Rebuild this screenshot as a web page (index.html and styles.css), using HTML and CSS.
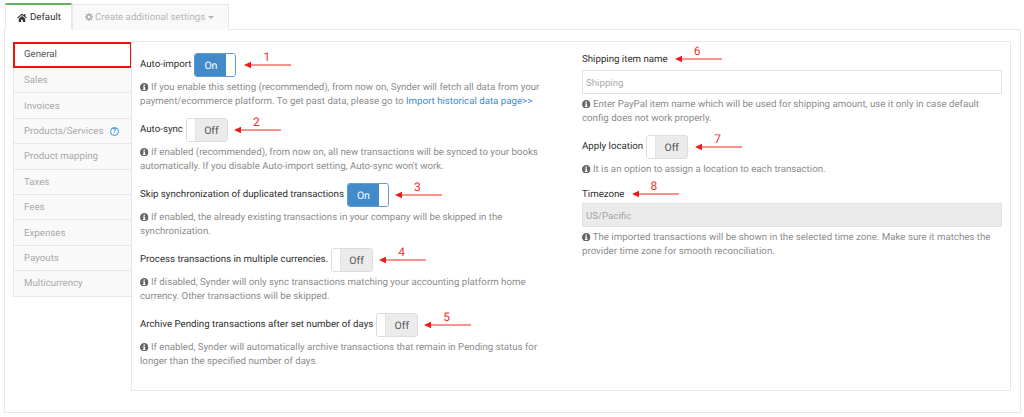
FILE: index.html
```html
<!DOCTYPE html>
<html lang="en">
<head>
<meta charset="utf-8">
<title>Settings</title>
<link rel="stylesheet" href="styles.css">
</head>
<body>
<svg class="defs" width="0" height="0" aria-hidden="true">
  <symbol id="info" viewBox="0 0 16 16">
    <path fill-rule="evenodd" d="M8 0a8 8 0 1 1 0 16A8 8 0 0 1 8 0zM6.600 2.600v2.600h2.800V2.600zM5.400 6.600v1.600h1.200v3.200H5.400V13h5.200v-1.600H9.400V6.600z"/>
  </symbol>
  <symbol id="arrow" viewBox="0 0 47 12" preserveAspectRatio="none">
    <path d="M6 6H47" stroke="#f0291f" stroke-width="1"/>
    <path d="M0 6L7 2.800V9.200Z" fill="#f0191a"/>
  </symbol>
</svg>
<div class="tabs">
  <div class="tab active">
    <svg class="tab-icon" viewBox="0 0 16 14"><path fill="#333" d="M8 0.600L0 7.400l1 1.200L8 2.800l7 5.800 1-1.200-2.600-2.200V1.400h-2v2.100zM2.800 9v5h3.800v-3.400h2.800V14h3.800V9L8 4.600z"/></svg>
    <span>Default</span>
  </div>
  <div class="tab disabled">
    <svg class="tab-icon gear" viewBox="0 0 16 16"><path fill="#b5b5b5" fill-rule="evenodd" d="M6.700 0h2.600l.4 2.200 1.200.5L12.800 1.400l1.800 1.800-1.300 1.900.5 1.200 2.200.4v2.600l-2.200.4-.5 1.200 1.300 1.900-1.800 1.800-1.900-1.300-1.200.5-.4 2.200H6.700l-.4-2.200-1.200-.5-1.900 1.300-1.800-1.800 1.300-1.900-.5-1.200L0 9.300V6.700l2.200-.4.5-1.200L1.400 3.200l1.800-1.800 1.900 1.300 1.200-.5zM8 5.500a2.500 2.500 0 1 0 0 5 2.500 2.500 0 0 0 0-5z"/></svg>
    <span>Create additional settings</span>
    <span class="caret"></span>
  </div>
</div>
<main class="outer">
  <nav class="side">
    <a class="side-item current">General</a>
    <a class="side-item">Sales</a>
    <a class="side-item">Invoices</a>
    <a class="side-item">Products/Services <span class="q">?</span></a>
    <a class="side-item">Product mapping</a>
    <a class="side-item">Taxes</a>
    <a class="side-item">Fees</a>
    <a class="side-item">Expenses</a>
    <a class="side-item">Payouts</a>
    <a class="side-item">Multicurrency</a>
  </nav>
  <section class="panel">
    <div class="col left">
      <div class="group">
        <div class="row"><label>Auto-import</label><span class="toggle on"><span class="state">On</span><span class="handle"></span></span>
          <span class="note n1"><svg><use href="#arrow"/></svg><b>1</b></span></div>
        <p class="help"><svg class="i"><use href="#info"/></svg> If you enable this setting (recommended), from now on, Synder will fetch all data from your<br>payment/ecommerce platform. To get past data, please go to <a class="link">Import historical data page&gt;&gt;</a></p>
      </div>
      <div class="group">
        <div class="row"><label>Auto-sync</label><span class="toggle"><span class="handle"></span><span class="state">Off</span></span>
          <span class="note"><svg><use href="#arrow"/></svg><b>2</b></span></div>
        <p class="help"><svg class="i"><use href="#info"/></svg> If enabled (recommended), from now on, all new transactions will be synced to your books<br>automatically. If you disable Auto-import setting, Auto-sync won't work.</p>
      </div>
      <div class="group">
        <div class="row"><label>Skip synchronization of duplicated transactions</label><span class="toggle on"><span class="state">On</span><span class="handle"></span></span>
          <span class="note"><svg><use href="#arrow"/></svg><b>3</b></span></div>
        <p class="help"><svg class="i"><use href="#info"/></svg> If enabled, the already existing transactions in your company will be skipped in the<br>synchronization.</p>
      </div>
      <div class="group">
        <div class="row"><label>Process transactions in multiple currencies.</label><span class="toggle"><span class="handle"></span><span class="state">Off</span></span>
          <span class="note"><svg><use href="#arrow"/></svg><b>4</b></span></div>
        <p class="help"><svg class="i"><use href="#info"/></svg> If disabled, Synder will only sync transactions matching your accounting platform home<br>currency. Other transactions will be skipped.</p>
      </div>
      <div class="group">
        <div class="row"><label>Archive Pending transactions after set number of days</label><span class="toggle"><span class="handle"></span><span class="state">Off</span></span>
          <span class="note"><svg><use href="#arrow"/></svg><b>5</b></span></div>
        <p class="help"><svg class="i"><use href="#info"/></svg> If enabled, Synder will automatically archive transactions that remain in Pending status for<br>longer than the specified number of days.</p>
      </div>
    </div>
    <div class="col right">
      <div class="row short"><label>Shipping item name</label><span class="note"><svg><use href="#arrow"/></svg><b>6</b></span></div>
      <input class="field" placeholder="Shipping">
      <p class="help"><svg class="i"><use href="#info"/></svg> Enter PayPal item name which will be used for shipping amount, use it only in case default<br>config does not work properly.</p>
      <div class="row apply"><label>Apply location</label><span class="toggle"><span class="handle"></span><span class="state">Off</span></span>
        <span class="note"><svg><use href="#arrow"/></svg><b>7</b></span></div>
      <p class="help"><svg class="i"><use href="#info"/></svg> It is an option to assign a location to each transaction.</p>
      <div class="row short tz"><label>Timezone</label><span class="note"><svg><use href="#arrow"/></svg><b>8</b></span></div>
      <input class="field" disabled value="US/Pacific">
      <p class="help"><svg class="i"><use href="#info"/></svg> The imported transactions will be shown in the selected time zone. Make sure it matches the<br>provider time zone for smooth reconciliation.</p>
    </div>
  </section>
</main>
</body>
</html>
```
FILE: styles.css
```css
* { box-sizing: border-box; }
html, body { margin: 0; padding: 0; }
body {
  width: 1024px;
  height: 417px;
  overflow: hidden;
  background: #fff;
  font-family: Roboto, "Liberation Sans", sans-serif;
  font-size: 9.7px;
  color: #333;
  padding: 3px 0 0 4px;
  text-rendering: geometricPrecision;
}
.defs { position: absolute; }
.tabs { display: flex; height: 26px; padding-left: 1px; position: relative; z-index: 1; }
.tab {
  display: flex;
  align-items: center;
  font-size: 9.7px;
  white-space: nowrap;
}
.tab.active {
  width: 67px;
  height: 27px;
  background: #fff;
  border-top: 2px solid #5cb85c;
  border-left: 1px solid #e8e8e8;
  border-right: 1px solid #e8e8e8;
  padding-left: 11px;
  color: #333;
}
.tab.disabled {
  width: 157px;
  height: 26px;
  margin-top: 1px;
  background: #f9f9f9;
  border: 1px solid #e8e8e8;
  border-bottom: 0;
  padding-left: 12px;
  color: #b5b5b5;
}
.tab-icon { width: 10px; height: 9px; margin-right: 3px; flex: none; }
.tab-icon.gear { width: 8px; height: 8px; margin-right: 2px; margin-bottom: 2px; }
.caret {
  width: 0;
  height: 0;
  margin-left: 3px;
  border-left: 3px solid transparent;
  border-right: 3px solid transparent;
  border-top: 3px solid #b5b5b5;
}
.outer {
  width: 1017px;
  height: 384px;
  border: 1px solid #e8e8e8;
  padding: 11px 8px 0 8px;
  display: flex;
  align-items: flex-start;
}
.side { width: 119px; margin-top: 1px; flex: none; }
.side-item {
  display: flex;
  align-items: center;
  height: 25.4px;
  padding: 1px 0 0 10px;
  background: #f9f9f9;
  border: 1px solid #e8e8e8;
  border-top: 0;
  color: #a9a9a9;
  font-size: 9.7px;
  white-space: pre;
}
.side-item.current {
  height: 26px;
  background: #fff;
  border: 2px solid #f01010;
  color: #555;
  padding: 0 0 2px 9px;
}
.q {
  display: inline-flex;
  align-items: center;
  justify-content: center;
  width: 9px;
  height: 9px;
  margin-left: 4px;
  border: 1.3px solid #3f8fd8;
  border-radius: 50%;
  color: #3f8fd8;
  font-size: 7px;
  font-weight: 700;
}
.panel {
  width: 880px;
  height: 350px;
  border: 1px solid #e8e8e8;
  display: flex;
  padding: 11px 0 0 8px;
  margin-left: -1px;
  background: #fff;
}
.col.left { width: 442px; }
.col.right { width: 421px; }
.group { height: 65px; }
.row { display: flex; align-items: center; height: 24px; }
label { font-size: 9.7px; color: #2e2e2e; margin-right: 3px; white-space: pre; padding-bottom: 2px; }
.toggle {
  display: flex;
  width: 42px;
  height: 24px;
  border: 1px solid #dcdcdc;
  border-radius: 3px;
  overflow: hidden;
  flex: none;
}
.toggle .handle { width: 9px; background: #fff; flex: none; border-right: 1px solid #e2e2e2; }
.toggle .state {
  flex: 1;
  display: flex;
  align-items: center;
  justify-content: center;
  background: #ebebeb;
  color: #555;
  font-size: 10.500px;
}
.toggle.on { border-color: #5d9bd3; }
.toggle.on .state { background: #428bca; color: #fff; }
.toggle.on .handle { border-right: 0; }
.note { position: relative; display: block; width: 47px; height: 12px; margin-left: 6px; }
.note.n1 { margin-left: 8px; }
.note svg { display: block; width: 47px; height: 12px; }
.note b {
  position: absolute;
  left: 19px;
  top: -8px;
  color: #f0302a;
  font-weight: 400;
  font-size: 12px;
  line-height: 12px;
}
.help {
  margin: 4px 0 0;
  font-size: 9.7px;
  line-height: 14px;
  color: #8c8c8c;
  white-space: pre;
}
.i { display: inline-block; width: 8.500px; height: 8.500px; fill: #666; vertical-align: -1px; }
.link { color: #428bca; }
.row.short { height: 12px; margin-bottom: 5px; }
.row.short .note { margin-left: 7px; }
.row.short label { padding-bottom: 0; margin-right: 0; }
.field {
  display: block;
  width: 420px;
  height: 24px;
  border: 1px solid #e2e2e2;
  padding: 0 3px;
  font: 9.7px Roboto, "Liberation Sans", sans-serif;
  color: #aaa;
  background: #fff;
  border-radius: 0;
  outline: 0;
}
.field::placeholder { color: #aaa; opacity: 1; }
.field:disabled { background: #ebebeb; color: #a5a5a5; -webkit-text-fill-color: #a5a5a5; opacity: 1; }
.row.apply { margin-top: 9px; }
.row.apply .note { margin-left: 7px; }
.row.short.tz { margin-top: 11px; margin-bottom: 3px; }
```
